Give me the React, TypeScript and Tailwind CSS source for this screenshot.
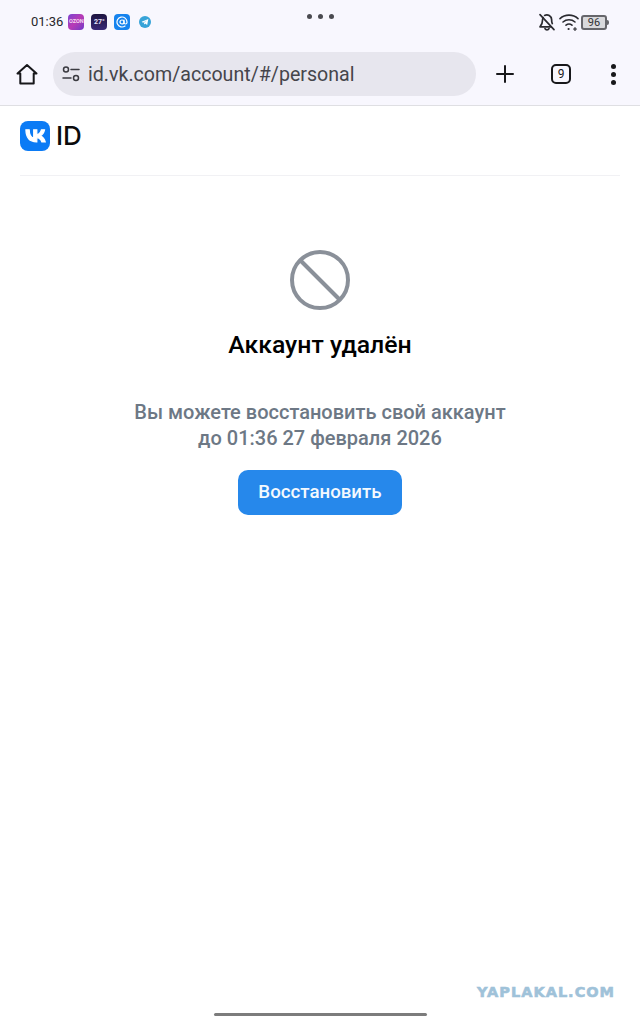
import React from "react";

const roboto = { fontFamily: "Roboto, 'Noto Sans', sans-serif" };

function StatusIcons() {
  return (
    <div className="flex items-center gap-[2px] text-[#2b2b30]">
      <svg width="20" height="20" viewBox="0 0 20 20" fill="none" stroke="currentColor" strokeWidth="1.7" strokeLinecap="round" strokeLinejoin="round">
        <path d="M6.2 5.6A5 5 0 0 0 5.5 8.2c0 4-1.6 5.6-2.5 6.6h11.2" />
        <path d="M7.6 3.4A4.8 4.8 0 0 1 14.6 7.6c0 1.6.2 3 .7 4" />
        <path d="M8 16.6a2.2 2.2 0 0 0 4 0" />
        <path d="M3 2.6l14 15" />
      </svg>
      <svg width="20" height="20" viewBox="0 0 20 20" fill="none" stroke="currentColor" strokeWidth="1.6" strokeLinecap="round">
        <path d="M1 6.600c5-4.600 13-4.600 18 0" />
        <path d="M4 10c3.400-3 8.600-3 12 0" />
        <path d="M7 13.200c1.800-1.400 4.200-1.400 6 0" />
        <circle cx="9.600" cy="17" r="1.100" fill="currentColor" stroke="none" />
        <path d="M14.500 17h3M16 15.500v3" strokeWidth="1.200" />
      </svg>
      <div className="flex items-center">
        <div className="flex h-[15px] w-[26px] items-center justify-center rounded-[3px] border-2 border-[#66666b] bg-[#d9d9dc]">
          <span className="text-[11px] leading-none text-[#333336]" style={roboto}>96</span>
        </div>
        <div className="h-[5px] w-[2px] rounded-r-sm bg-[#66666b]" />
      </div>
    </div>
  );
}

function NotificationIcons() {
  return (
    <div className="flex items-center gap-[7px]">
      <div className="flex h-[16px] w-[16px] items-center justify-center overflow-hidden rounded-[4px] bg-gradient-to-br from-[#7a3fd0] via-[#b93ab5] to-[#6f35c8]">
        <span className="text-[5.500px] font-bold leading-none text-[#f4d6ef]" style={roboto}>OZON</span>
      </div>
      <div className="flex h-[16px] w-[16px] items-center justify-center overflow-hidden rounded-[4px] bg-gradient-to-b from-[#1d1440] to-[#3a2a78]">
        <span className="text-[7px] font-bold leading-none text-[#e7e2fa]" style={roboto}>27°</span>
      </div>
      <div className="flex h-[16px] w-[16px] items-center justify-center rounded-[4px] bg-[#1683ee] text-white">
        <svg width="12" height="12" viewBox="0 0 24 24" fill="none" stroke="currentColor" strokeWidth="2.400" strokeLinecap="round">
          <circle cx="12" cy="12" r="4" />
          <path d="M16 8v5a3 3 0 0 0 6 0v-1a10 10 0 1 0-4 8" />
        </svg>
      </div>
      <div className="ml-[2px] flex h-[12px] w-[12px] items-center justify-center rounded-full bg-[#37a3d8]">
        <svg width="8" height="8" viewBox="0 0 24 24" fill="#fff">
          <path d="M2 11.500 22 3l-3.500 18-6-4.500-3 3-.8-5.500L19 6.500 6 14z" />
        </svg>
      </div>
    </div>
  );
}

export default function App() {
  return (
    <div className="flex h-[1022px] w-[640px] flex-col bg-white" style={roboto}>
      <header className="h-[106px] shrink-0 border-b border-[#dfdfe3] bg-[#f8f7fe]">
        <div className="grid h-[45px] grid-cols-[1fr_auto_1fr] pl-[31px] pr-[31px]">
          <div className="flex items-start gap-[5px] pt-[14px]">
            <span className="text-[13px] leading-[16px] text-[#27272b]">01:36</span>
            <NotificationIcons />
          </div>
          <div className="flex items-start gap-[6px] pt-[14px]">
            <div className="h-[5px] w-[5px] rounded-full bg-[#4a4a50]" />
            <div className="h-[5px] w-[5px] rounded-full bg-[#4a4a50]" />
            <div className="h-[5px] w-[5px] rounded-full bg-[#4a4a50]" />
          </div>
          <div className="flex items-start justify-end pt-[12px]">
            <StatusIcons />
          </div>
        </div>
        <div className="mt-[7px] flex h-[44px] items-center">
          <div className="flex w-[53px] items-center justify-center">
            <svg width="22" height="22" viewBox="0 0 22 22" fill="none" stroke="#18181b" strokeWidth="2" strokeLinejoin="round">
              <path d="M11 2 1.500 10.500h2.800V20.500h13.400V10.500h2.800z" />
            </svg>
          </div>
          <div className="flex h-[44px] w-[423px] items-center rounded-full bg-[#e7e6ee] pl-[9px]">
            <svg width="18" height="16" viewBox="0 0 18 16" fill="none" stroke="#3a3a40" strokeWidth="1.500" strokeLinecap="round" className="shrink-0">
              <circle cx="4" cy="3.500" r="2.500" />
              <path d="M9 3.500h8" />
              <circle cx="14" cy="12" r="2.500" />
              <path d="M1 12h8" />
            </svg>
            <span className="ml-[8px] pt-[2px] text-[19.600px] leading-none text-[#45454b]">id.vk.com/account/#/personal</span>
          </div>
          <div className="ml-[18px] flex w-[21px] items-center justify-center">
            <svg width="18" height="18" viewBox="0 0 18 18" stroke="#18181b" strokeWidth="2" strokeLinecap="round">
              <path d="M9 1v16M1 9h16" />
            </svg>
          </div>
          <div className="ml-[36px] flex h-[20px] w-[20px] items-center justify-center rounded-[5px] border-2 border-[#18181b]">
            <span className="text-[12px] leading-none text-[#18181b]">9</span>
          </div>
          <div className="ml-[40px] flex flex-col gap-[3px]">
            <div className="h-[5px] w-[5px] rounded-full bg-[#18181b]" />
            <div className="h-[5px] w-[5px] rounded-full bg-[#18181b]" />
            <div className="h-[5px] w-[5px] rounded-full bg-[#18181b]" />
          </div>
        </div>
      </header>

      <main className="flex flex-1 flex-col px-[20px]">
        <div className="flex h-[70px] items-center border-b border-[#f1f1f4] pb-[10px]">
          <div className="flex h-[30px] w-[30px] items-center justify-center rounded-[8px] bg-[#0b7bf5]">
            <svg width="29" height="29" viewBox="0 0 48 48" fill="#fff">
              <path d="M25.540 34.580c-10.940 0-17.180-7.500-17.440-19.980h5.480c.18 9.160 4.220 13.040 7.420 13.840V14.600h5.160v7.900c3.160-.34 6.480-3.940 7.600-7.900h5.160c-.86 4.880-4.460 8.480-7.020 9.960 2.560 1.200 6.660 4.340 8.220 10.020h-5.680c-1.220-3.800-4.260-6.740-8.280-7.140v7.140h-.62z" stroke="#fff" strokeWidth="2" />
            </svg>
          </div>
          <span className="ml-[6px] text-[26px] font-medium leading-none text-[#0b0b0c]" style={{ fontFamily: "Inter, sans-serif" }}>ID</span>
        </div>

        <div className="flex flex-col items-center pt-[74px]">
          <svg width="60" height="60" viewBox="0 0 60 60" fill="none" stroke="#8a9099" strokeWidth="4">
            <circle cx="30" cy="30" r="28" />
            <path d="M10.500 10.500l39 39" />
          </svg>
          <h1 className="mt-[21px] text-[24.800px] font-medium leading-[28px] text-black">Аккаунт удалён</h1>
          <p className="mt-[40px] text-center text-[20px] font-medium leading-[26px] text-[#6d7885]">
            Вы можете восстановить свой аккаунт
            <br />
            до 01:36 27 февраля 2026
          </p>
          <button className="mt-[19px] h-[45px] w-[164px] rounded-[10px] bg-[#2688eb] text-[18.700px] font-medium text-[#f4f9fe]">
            Восстановить
          </button>
        </div>
      </main>

      <div className="flex h-[9px] shrink-0 justify-center">
        <div className="h-[3px] w-[213px] rounded-full bg-[#7c7c7c]" />
      </div>

      <span
        className="absolute left-[477px] top-[984px] text-[14.500px] font-bold leading-[16px] tracking-[1px] text-[#9fc2d9] [-webkit-text-stroke:0.6px_#9fc2d9]"
        style={{ fontFamily: "'DejaVu Sans', sans-serif" }}
      >
        YAPLAKAL.COM
      </span>
    </div>
  );
}
